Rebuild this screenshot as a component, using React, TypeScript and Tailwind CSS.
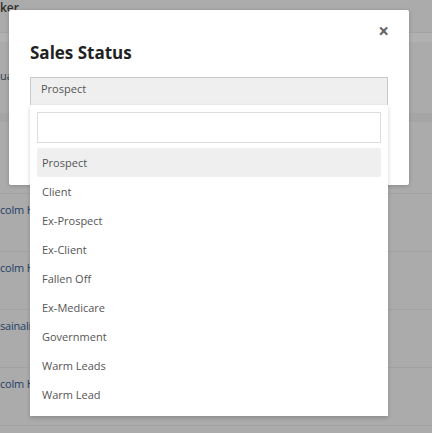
import React from 'react';

const options = [
  'Prospect',
  'Client',
  'Ex-Prospect',
  'Ex-Client',
  'Fallen Off',
  'Ex-Medicare',
  'Government',
  'Warm Leads',
  'Warm Lead',
];

const rows = ['colm H', 'colm H', 'sainali I', 'colm H'];

export default function App() {
  return (
    <div
      className="relative w-[432px] h-[433px] overflow-hidden bg-[#ababab]"
      style={{ fontFamily: '"Open Sans", "Noto Sans", sans-serif' }}
    >
      {/* page behind the backdrop */}
      <div className="flex flex-col">
        <div className="h-[33px] border-b border-[#a4a4a4] pt-[1px] text-[12px] font-semibold text-[#2e2e2e] leading-[14px]">
          ker
        </div>
        <div className="h-[9px] bg-[#b1b1b1]" />
        <div className="h-[71px] pt-[26px] text-[11px] text-[#2e3a48] leading-[16px]">ua</div>
        <div className="h-[9px] bg-[#a5a5a5]" />
        <div className="h-[71px]" />
        {rows.map((r, i) => (
          <div key={i} className="h-[58px] border-t border-[#a2a2a2] pt-[8px] text-[11px] tracking-[-0.2px] text-[#1f3f66] leading-[16px]">
            {r}
          </div>
        ))}
        <div className="h-[10px] border-t border-[#a2a2a2]" />
      </div>

      {/* modal */}
      <div className="absolute left-[9px] top-[10px] w-[400px] h-[175px] bg-white rounded-[2px] shadow-[0_1px_4px_rgba(0,0,0,0.2)]">
        <button className="absolute right-[20px] top-[12px] text-[19px] font-bold leading-none text-[#666]">×</button>
        <div className="px-[21px] pt-[31px]">
          <h2 className="text-[17px] font-bold leading-[24px] text-[#222]">Sales Status</h2>
          <div className="relative mt-[12px]">
            <div className="h-[29px] border border-[#c8c8c8] bg-[#efefef] pl-[10px] text-[11px] leading-[22px] text-[#555]">
              Prospect
            </div>
          </div>
        </div>
      </div>

      {/* dropdown */}
      <div className="absolute left-[30px] top-[105px] w-[358px] h-[311px] bg-white shadow-[0_2px_4px_rgba(0,0,0,0.18)] px-[7px] pt-[7px]">
        <div className="h-[31px] border border-[#dddddd] bg-white" />
        <ul className="mt-[5px] flex flex-col">
          {options.map((o, i) => (
            <li
              key={o}
              className={`h-[29px] pl-[5px] text-[11px] leading-[29px] text-[#555] rounded-[2px] ${i === 0 ? 'bg-[#efefef]' : ''}`}
            >
              {o}
            </li>
          ))}
        </ul>
      </div>
    </div>
  );
}
